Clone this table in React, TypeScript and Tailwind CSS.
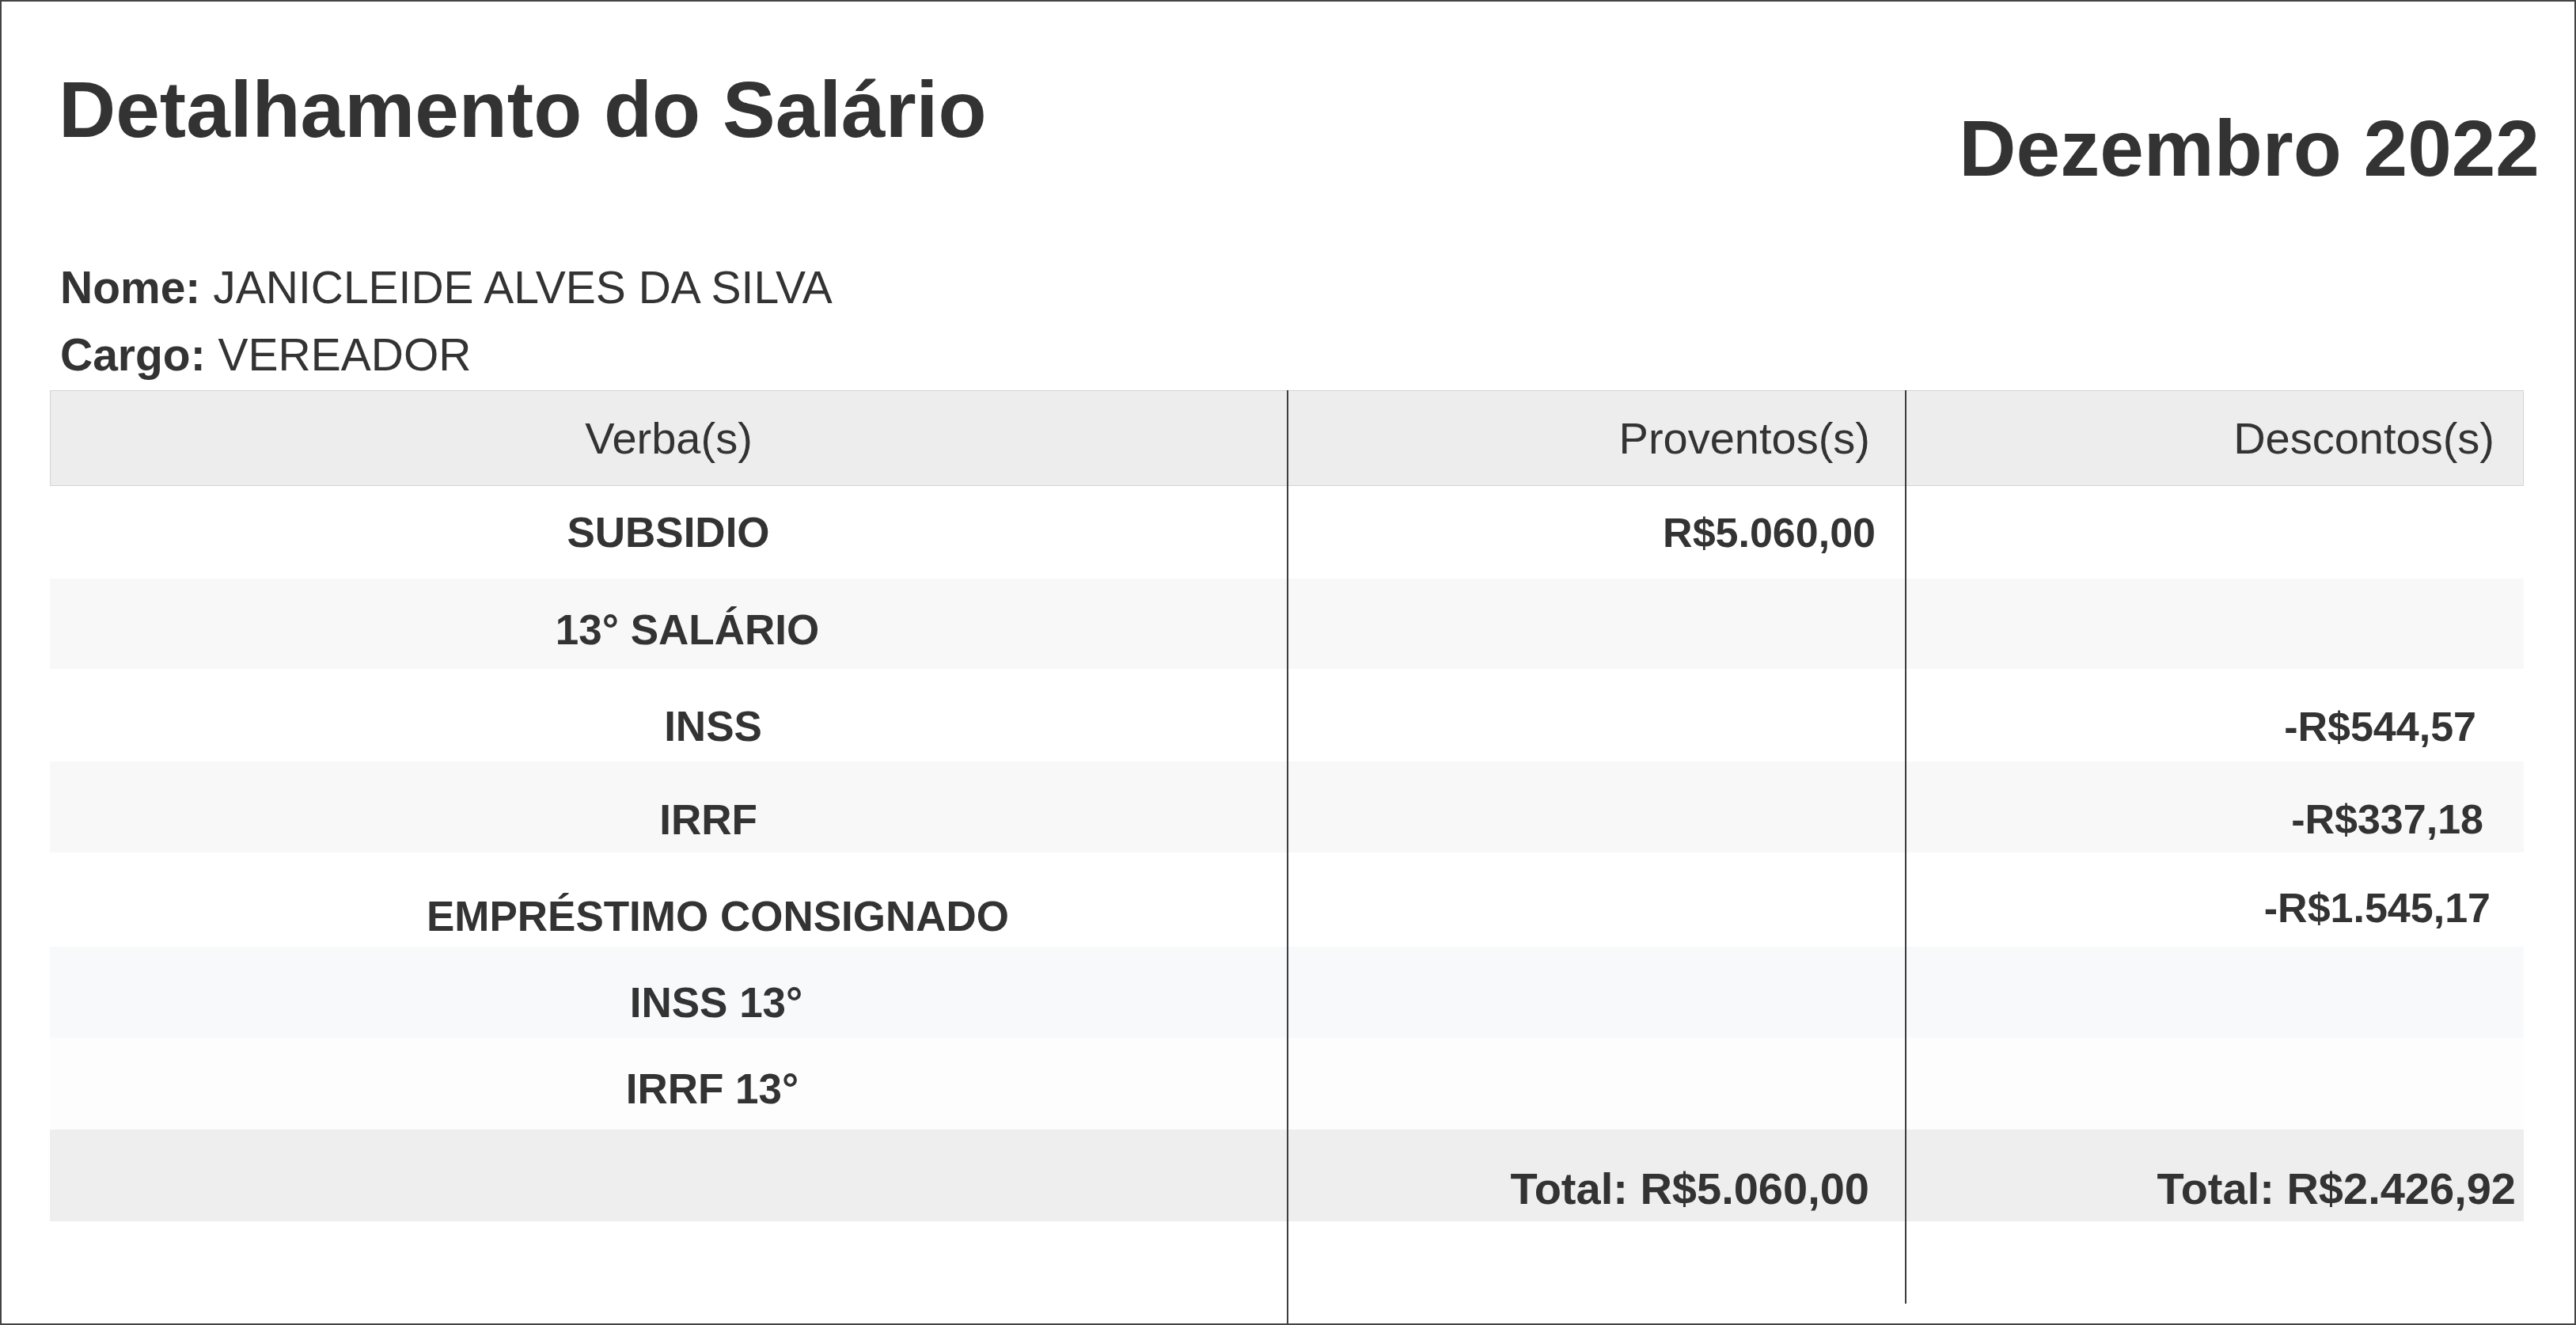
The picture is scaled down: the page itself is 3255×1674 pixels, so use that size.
import React from 'react';

interface Linha {
  verba: string;
  proventos: string;
  descontos: string;
  altura: string;
  fundo: string;
  verbaPad: string;
  provPad: string;
  descPad: string;
}

const linhas: Linha[] = [
  { verba: 'SUBSIDIO', proventos: 'R$5.060,00', descontos: '', altura: 'h-[117px]', fundo: 'bg-white', verbaPad: 'pl-0 pt-0', provPad: 'pr-[37px] pt-0', descPad: 'pr-[40px] pt-0' },
  { verba: '13° SALÁRIO', proventos: '', descontos: '', altura: 'h-[114px]', fundo: 'bg-[#f8f8f8]', verbaPad: 'pl-[48px] pt-[14px]', provPad: 'pr-[37px] pt-[14px]', descPad: 'pr-[40px] pt-[14px]' },
  { verba: 'INSS', proventos: '', descontos: '-R$544,57', altura: 'h-[117px]', fundo: 'bg-white', verbaPad: 'pl-[113px] pt-[28px]', provPad: 'pr-[37px] pt-[28px]', descPad: 'pr-[60px] pt-[28px]' },
  { verba: 'IRRF', proventos: '', descontos: '-R$337,18', altura: 'h-[115px]', fundo: 'bg-[#f8f8f8]', verbaPad: 'pl-[101px] pt-[32px]', provPad: 'pr-[37px] pt-[32px]', descPad: 'pr-[51px] pt-[30px]' },
  { verba: 'EMPRÉSTIMO CONSIGNADO', proventos: '', descontos: '-R$1.545,17', altura: 'h-[119px]', fundo: 'bg-white', verbaPad: 'pl-[125px] pt-[42px]', provPad: 'pr-[37px] pt-[20px]', descPad: 'pr-[42px] pt-[20px]' },
  { verba: 'INSS 13°', proventos: '', descontos: '', altura: 'h-[115px]', fundo: 'bg-[#f8f9fa]', verbaPad: 'pl-[121px] pt-[26px]', provPad: 'pr-[37px] pt-[26px]', descPad: 'pr-[40px] pt-[26px]' },
  { verba: 'IRRF 13°', proventos: '', descontos: '', altura: 'h-[116px]', fundo: 'bg-[#fdfdfd]', verbaPad: 'pl-[111px] pt-[12px]', provPad: 'pr-[37px] pt-[12px]', descPad: 'pr-[40px] pt-[12px]' },
];

const total = { proventos: 'Total: R$5.060,00', descontos: 'Total: R$2.426,92' };

export default function App() {
  return (
    <div className="w-full h-[1674px] border-2 border-[#444444] bg-white flex flex-col pl-[61px] pr-[64px] pt-[86px] text-[#333333] font-['Liberation_Sans',Arial,sans-serif]">
      {/* Cabeçalho */}
      <div className="flex justify-between items-start pl-[11px] -mr-[20px]">
        <h1 className="text-[100px] leading-none font-bold">Detalhamento do Salário</h1>
        <h2 className="text-[100px] leading-none font-bold mt-[49px]">Dezembro 2022</h2>
      </div>

      {/* Dados do servidor */}
      <div className="mt-[84px] pl-[13px] text-[57px] leading-[85px]">
        <p><span className="font-bold">Nome:</span> JANICLEIDE ALVES DA SILVA</p>
        <p><span className="font-bold">Cargo:</span> VEREADOR</p>
      </div>

      {/* Tabela */}
      <div className="mt-[2px] flex flex-1 items-stretch">
        <div className="w-[1563px] flex flex-col">
          <div className="h-[121px] bg-[#ededed] border-y border-l border-[#d4d4d4] flex items-center justify-center text-[56px] leading-none">
            Verba(s)
          </div>
          {linhas.map(l => (
            <div key={l.verba} className={`${l.altura} ${l.fundo} ${l.verbaPad} flex items-center justify-center text-[53px] leading-none font-bold`}>
              {l.verba}
            </div>
          ))}
          <div className="h-[116px] bg-[#eeeeee]" />
        </div>

        <div className="w-[781px] border-l-2 border-[#3d3d3d] flex flex-col">
          <div className="h-[121px] bg-[#ededed] border-y border-[#d4d4d4] flex items-center justify-end pr-[44px] text-[56px] leading-none">
            Proventos(s)
          </div>
          {linhas.map(l => (
            <div key={l.verba} className={`${l.altura} ${l.fundo} ${l.provPad} flex items-center justify-end text-[52px] leading-none font-bold`}>
              {l.proventos}
            </div>
          ))}
          <div className="h-[116px] bg-[#eeeeee] pt-[34px] pr-[45px] flex items-center justify-end text-[56px] leading-none font-bold">
            {total.proventos}
          </div>
        </div>

        <div className="flex-1 self-start border-l-2 border-[#3d3d3d] flex flex-col pb-[104px]">
          <div className="h-[121px] bg-[#ededed] border-y border-r border-[#d4d4d4] flex items-center justify-end pr-[36px] text-[56px] leading-none">
            Descontos(s)
          </div>
          {linhas.map(l => (
            <div key={l.verba} className={`${l.altura} ${l.fundo} ${l.descPad} flex items-center justify-end text-[52px] leading-none font-bold`}>
              {l.descontos}
            </div>
          ))}
          <div className="h-[116px] bg-[#eeeeee] pt-[34px] pr-[10px] flex items-center justify-end text-[56px] leading-none font-bold">
            {total.descontos}
          </div>
        </div>
      </div>
    </div>
  );
}
